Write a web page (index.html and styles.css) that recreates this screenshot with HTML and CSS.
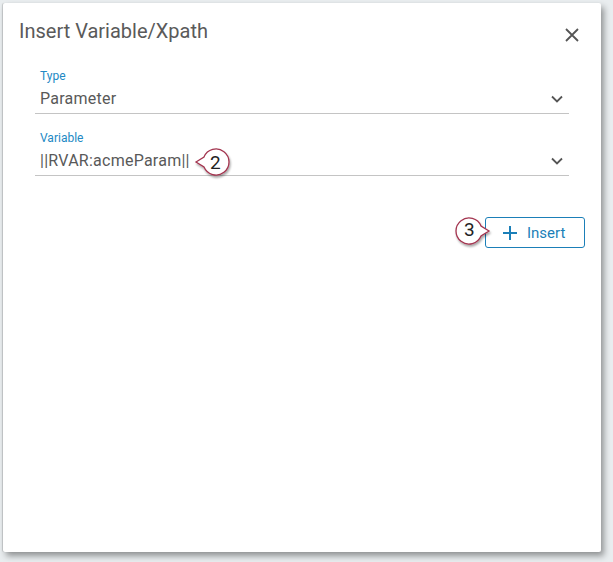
FILE: index.html
```html
<!DOCTYPE html>
<html>
<head>
<meta charset="utf-8">
<link rel="stylesheet" href="styles.css">
</head>
<body>
<div class="dialog">
  <div class="header">
    <h1 class="title">Insert Variable/Xpath</h1>
    <svg class="close" width="14" height="14" viewBox="0 0 14 14"><path d="M1 1L13 13M13 1L1 13" stroke="#555" stroke-width="1.8" fill="none"/></svg>
  </div>
  <div class="content">
    <div class="field">
      <div class="label">Type</div>
      <div class="value-row">
        <span class="value">Parameter</span>
        <svg class="chev" width="12" height="8" viewBox="0 0 12 8"><path d="M1 1.5L6 6.5L11 1.5" stroke="#555" stroke-width="1.8" fill="none"/></svg>
      </div>
    </div>
    <div class="field">
      <div class="label">Variable</div>
      <div class="value-row">
        <span class="value">||RVAR:acmeParam||</span>
        <svg class="chev" width="12" height="8" viewBox="0 0 12 8"><path d="M1 1.5L6 6.5L11 1.5" stroke="#555" stroke-width="1.8" fill="none"/></svg>
      </div>
      <div class="callout callout-2">
        <svg width="40" height="34" viewBox="0 0 40 34"><path d="M7 14 L15 9 A13 13 0 1 1 15 19 Z" fill="#fff" stroke="#a3344f" stroke-width="1.3" filter="url(#sh)"/><defs><filter id="sh" x="-30%" y="-30%" width="160%" height="170%"><feDropShadow dx="1" dy="2" stdDeviation="1.2" flood-color="#000" flood-opacity="0.35"/></filter></defs></svg>
        <span class="num">2</span>
      </div>
    </div>
    <div class="actions">
      <div class="callout callout-3">
        <svg width="40" height="34" viewBox="0 0 40 34"><path d="M33 16 L25 11 A13 13 0 1 0 25 21 Z" fill="#fff" stroke="#a3344f" stroke-width="1.3" filter="url(#sh2)"/><defs><filter id="sh2" x="-30%" y="-30%" width="160%" height="170%"><feDropShadow dx="1" dy="2" stdDeviation="1.2" flood-color="#000" flood-opacity="0.35"/></filter></defs></svg>
        <span class="num">3</span>
      </div>
      <button class="insert">
        <svg width="16" height="16" viewBox="0 0 16 16"><path d="M8 1V15M1 8H15" stroke="#1b7fb8" stroke-width="2" fill="none"/></svg>
        <span>Insert</span>
      </button>
    </div>
  </div>
</div>
</body>
</html>
```

FILE: styles.css
```css
html, body {
  margin: 0;
  padding: 0;
}
body {
  background: #e9edef;
  width: 613px;
  height: 562px;
  overflow: hidden;
  font-family: Roboto, "Liberation Sans", sans-serif;
  padding: 3px 0 0 3px;
  box-sizing: border-box;
}
.dialog {
  width: 598px;
  height: 549px;
  background: #fff;
  box-shadow: 3px 4px 6px rgba(0,0,0,0.38), -1px 0 1px rgba(0,0,0,0.15);
  box-sizing: border-box;
  border-radius: 2px;
}
.header {
  display: flex;
  justify-content: space-between;
  align-items: flex-start;
  padding: 16px 22px 0 16px;
}
.title {
  margin: 0;
  font-size: 20px;
  font-weight: 400;
  color: #5a5a5a;
  line-height: 24px;
}
.close {
  margin-top: 9px;
}
.content {
  padding: 26px 32px 0 32px;
}
.field {
  position: relative;
  border-bottom: 1px solid #c4c4c4;
  margin-bottom: 17px;
}
.label {
  font-size: 12px;
  color: #2389c4;
  line-height: 14px;
  padding-left: 5px;
}
.value-row {
  display: flex;
  justify-content: space-between;
  align-items: center;
  padding: 6px 6px 5px 5px;
  height: 19px;
}
.value {
  font-size: 16px;
  color: #595959;
  letter-spacing: 0.25px;
}
.callout {
  position: absolute;
  width: 40px;
  height: 34px;
}
.callout svg {
  position: absolute;
  left: 0;
  top: 0;
  overflow: visible;
}
.num {
  position: absolute;
  top: 5px;
  font-size: 19px;
  color: #222;
  line-height: 20px;
  font-family: Roboto, "Liberation Sans", sans-serif;
}
.callout-2 {
  left: 154px;
  top: 17px;
}
.callout-2 .num {
  left: 21px;
}
.actions {
  display: flex;
  justify-content: flex-end;
  align-items: center;
  margin-top: 41px;
  margin-right: -16px;
  position: relative;
}
.callout-3 {
  right: 89px;
  top: -2px;
}
.callout-3 .num {
  left: 8px;
}
.insert {
  display: flex;
  align-items: center;
  gap: 9px;
  width: 100px;
  height: 31px;
  box-sizing: border-box;
  border: 1px solid #1b7fb8;
  border-radius: 3px;
  background: #fff;
  color: #1b7fb8;
  font-family: Roboto, "Liberation Sans", sans-serif;
  font-size: 15px;
  padding: 0 0 0 16px;
}
```
